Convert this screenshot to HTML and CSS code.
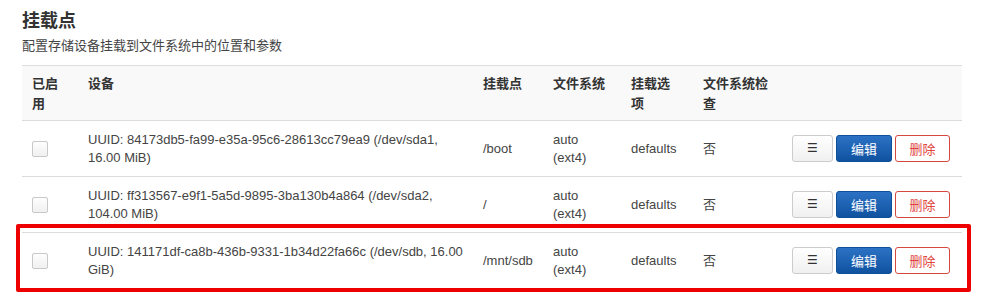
FILE: index.html
```html
<!DOCTYPE html>
<html lang="zh">
<head>
<meta charset="utf-8">
<link rel="stylesheet" href="styles.css">
</head>
<body>
<div class="page">
  <h2 class="title">挂载点</h2>
  <p class="desc">配置存储设备挂载到文件系统中的位置和参数</p>
  <div class="table-wrap">
    <table class="mounts">
      <colgroup>
        <col class="c-en"><col class="c-dev"><col class="c-mp"><col class="c-fs"><col class="c-opt"><col class="c-chk"><col class="c-act">
      </colgroup>
      <thead>
        <tr>
          <th>已启用</th>
          <th>设备</th>
          <th>挂载点</th>
          <th>文件系统</th>
          <th>挂载选项</th>
          <th>文件系统检查</th>
          <th></th>
        </tr>
      </thead>
      <tbody>
        <tr>
          <td><span class="cb"></span></td>
          <td>UUID: 84173db5-fa99-e35a-95c6-28613cc79ea9 (/dev/sda1, 16.00 MiB)</td>
          <td>/boot</td>
          <td>auto (ext4)</td>
          <td>defaults</td>
          <td>否</td>
          <td class="act"><div class="btns"><button class="btn btn-drag">☰</button><button class="btn btn-edit">编辑</button><button class="btn btn-del">删除</button></div></td>
        </tr>
        <tr>
          <td><span class="cb"></span></td>
          <td>UUID: ff313567-e9f1-5a5d-9895-3ba130b4a864 (/dev/sda2, 104.00 MiB)</td>
          <td>/</td>
          <td>auto (ext4)</td>
          <td>defaults</td>
          <td>否</td>
          <td class="act"><div class="btns"><button class="btn btn-drag">☰</button><button class="btn btn-edit">编辑</button><button class="btn btn-del">删除</button></div></td>
        </tr>
        <tr>
          <td><span class="cb"></span></td>
          <td>UUID: 141171df-ca8b-436b-9331-1b34d22fa66c (/dev/sdb, 16.00 GiB)</td>
          <td>/mnt/sdb</td>
          <td>auto (ext4)</td>
          <td>defaults</td>
          <td>否</td>
          <td class="act"><div class="btns"><button class="btn btn-drag">☰</button><button class="btn btn-edit">编辑</button><button class="btn btn-del">删除</button></div></td>
        </tr>
      </tbody>
    </table>
    <div class="highlight"></div>
  </div>
</div>
</body>
</html>
```

FILE: styles.css
```css
html, body {
  margin: 0;
  padding: 0;
  background: #fff;
}
body {
  font-family: "Liberation Sans", Arial, "Noto Sans CJK SC", sans-serif;
  color: #333;
  font-size: 13px;
}
.page {
  padding: 0 32px 12px 22px;
}
.title {
  font-family: "Noto Sans CJK SC", "Liberation Sans", sans-serif;
  font-size: 18px;
  font-weight: 700;
  line-height: 24px;
  margin: 7px 0 0 0;
  color: #333;
}
.desc {
  font-family: "Noto Sans CJK SC", "Liberation Sans", sans-serif;
  font-size: 13px;
  line-height: 18px;
  margin: 5px 0 0 0;
  color: #444;
}
.table-wrap {
  position: relative;
  margin-top: 11px;
}
.mounts {
  width: 940px;
  table-layout: fixed;
  border-collapse: collapse;
}
.c-en { width: 56px; }
.c-dev { width: 395px; }
.c-mp { width: 70px; }
.c-fs { width: 78px; }
.c-opt { width: 72px; }
.c-chk { width: 90px; }
.c-act { width: 179px; }
.mounts th, .mounts td {
  text-align: left;
  vertical-align: middle;
  border-top: 1px solid #ddd;
}
.mounts th {
  font-family: "Noto Sans CJK SC", "Liberation Sans", sans-serif;
  font-size: 13px;
  font-weight: 700;
  line-height: 20px;
  padding: 7px 10px 7px 10px;
  background: #f9f9f9;
  border-bottom: 1px solid #ddd;
  vertical-align: top;
}
.mounts th:nth-child(5) {
  padding-right: 14px;
}
.mounts td {
  color: #444;
  line-height: 18px;
  padding: 10px 10px 9px 10px;
}
.cb {
  display: block;
  width: 14px;
  height: 14px;
  border: 1px solid #c8c8c8;
  border-radius: 2px;
  background: linear-gradient(#fdfdfd, #f0f0f0);
}
.mounts td.act {
  padding: 0 12px 0 0;
}
.btns {
  display: flex;
  justify-content: flex-end;
  gap: 3px;
}
.btn {
  font-family: "Noto Sans CJK SC", "Liberation Sans", sans-serif;
  font-size: 13px;
  height: 27px;
  border-radius: 3px;
  padding: 0;
  line-height: 25px;
  cursor: pointer;
}
.btn-drag {
  width: 41px;
  background: linear-gradient(#fff, #f0f0f0);
  border: 1px solid #ccc;
  color: #333;
  font-family: "DejaVu Sans", sans-serif;
  font-size: 12px;
}
.btn-edit {
  width: 56px;
  background: linear-gradient(#2c72c4, #0f52a0);
  border: 1px solid #0e4f9a;
  color: #fff;
}
.btn-del {
  width: 55px;
  background: #fff;
  border: 1px solid #d4483e;
  color: #e0443a;
}
.highlight {
  position: absolute;
  left: -6px;
  top: 159px;
  width: 947px;
  height: 60px;
  border: 4px solid #ee0000;
  border-radius: 2px;
  pointer-events: none;
}
```
